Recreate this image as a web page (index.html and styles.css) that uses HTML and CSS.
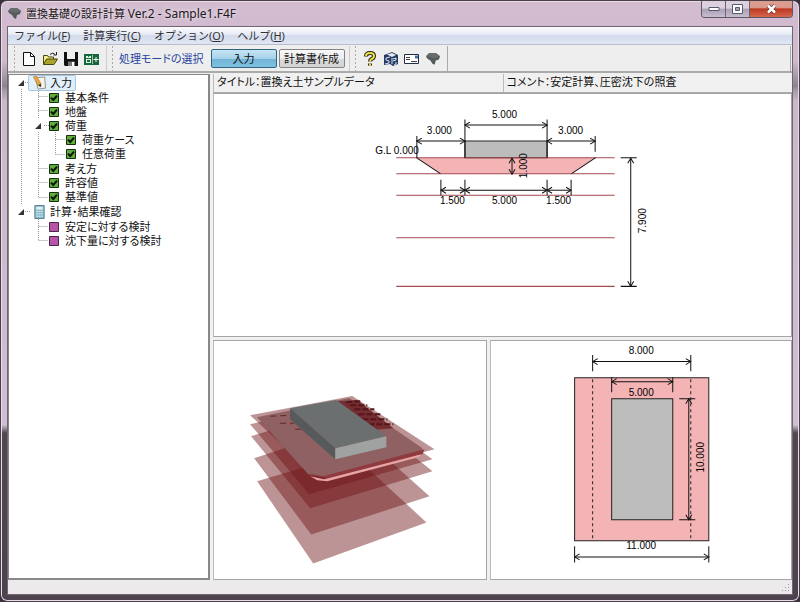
FILE: index.html
```html
<!DOCTYPE html>
<html lang="ja">
<head>
<meta charset="utf-8">
<title>置換基礎の設計計算 Ver.2 - Sample1.F4F</title>
<link rel="stylesheet" href="styles.css">
</head>
<body>
<svg class="defs" aria-hidden="true">
  <defs>
    <marker id="arrow" viewBox="0 0 8 8" refX="7" refY="4" markerWidth="8" markerHeight="8" markerUnits="userSpaceOnUse" orient="auto-start-reverse"><path d="M2 1 7 4 2 7" fill="none" stroke="#111" stroke-width="1"/></marker>
    <symbol id="check" viewBox="0 0 10 10"><path d="M.5.5h9v9h-9z" fill="#5fae3c" stroke="#16300e"/><path d="M2 4.6 4.3 7 8 2.6" fill="none" stroke="#071203" stroke-width="2"/></symbol>
    <symbol id="todo" viewBox="0 0 10 10"><path d="M.5.5h9v9h-9z" fill="#b455a8" stroke="#4b2546"/></symbol>
    <symbol id="open" viewBox="0 0 6 6"><path d="M6 0v6H0z" fill="#333"/></symbol>
    <symbol id="rock" viewBox="0 0 14 14"><path d="M1 4 4 1 10 1 14 4 13 7 10 8 9 12 7 11 5 8 2 6z" fill="#555a5a"/><path d="M1 4 4 1 10 1 14 4 9 6 5 5z" fill="#666b6b"/></symbol>
  </defs>
</svg>
<div class="window">
  <header class="titlebar">
    <svg class="app-icon"><use href="#rock"/></svg>
    <h1>置換基礎の設計計算 <span>Ver.2 - Sample1.F4F</span></h1>
    <div class="caption-buttons">
      <button class="cap" aria-label="最小化"><svg width="12" height="6" viewBox="0 0 12 6"><path d="M1 1.500h10v3H1z" fill="#fff" stroke="#555b6b"/></svg></button>
      <button class="cap" aria-label="最大化"><svg width="11" height="10" viewBox="0 0 11 10"><path d="M.5.5h10v9H.5z" fill="#fff" stroke="#555b6b"/><path d="M3.500 3.500h4v3h-4z" fill="#a9a0b5" stroke="#555b6b"/></svg></button>
      <button class="cap close" aria-label="閉じる"><svg width="11" height="10" viewBox="0 0 11 10"><path d="m2 1.500 7 7m0-7-7 7" stroke="#6b3535" stroke-width="4"/><path d="m2 1.500 7 7m0-7-7 7" stroke="#fff" stroke-width="2.500"/></svg></button>
    </div>
  </header>
  <div class="client">
    <nav class="menubar">
      <a href="#">ファイル(<u>F</u>)</a><a href="#">計算実行(<u>C</u>)</a><a href="#">オプション(<u>O</u>)</a><a href="#">ヘルプ(<u>H</u>)</a>
    </nav>
    <div class="toolbar">
      <div class="bands">
        <div class="band">
          <button class="tool" aria-label="新規作成"><svg viewBox="0 0 16 16"><path d="M2.500 1.500h7l4 4v9h-11z" fill="#fff" stroke="#111"/><path d="M9.500 1.500v4h4" fill="none" stroke="#111"/></svg></button>
          <button class="tool" aria-label="開く"><svg viewBox="0 0 16 16"><path d="M1.500 13.500v-9h4l1 1.500h5v2" fill="#f5ee8c" stroke="#4a480c"/><path d="m1.500 13.500 3-5.500h11l-3.500 5.500z" fill="#aaa52a" stroke="#4a480c"/><path d="M8 3.500q3-3 5 0m1.500-2.500v3h-3" fill="none" stroke="#222"/></svg></button>
          <button class="tool" aria-label="上書き保存"><svg viewBox="0 0 16 16"><path d="M1 1h14v14H2l-1-1z" fill="#111"/><path d="M4 1h8v7H4z" fill="#eee"/><path d="M5 10.500h7V15H5z" fill="#777"/><path d="M9 11h2v4H9z" fill="#fff"/></svg></button>
          <button class="tool" aria-label="計算"><svg viewBox="0 0 16 16"><path d="M0 3h15v11H0z" fill="#14663c"/><path d="M2 5h2v1h1V5h2v2H2zm0 3h5v4H2z" fill="#e4f5df"/><path d="M3 9h3v2H3z" fill="#14663c"/><path d="M8.500 4v9" stroke="#9cc7a8"/><path d="M12 6v5m-2.500-2.500h5" stroke="#fff"/></svg></button>
        </div>
        <div class="band modes">
          <span class="mode-label">処理モードの選択</span>
          <button class="mode active">入力</button>
          <button class="mode">計算書作成</button>
        </div>
        <div class="band">
          <button class="tool" aria-label="ヘルプ"><svg viewBox="0 0 16 16"><path d="M4 5.500q0-3.500 4-3.500t4 3q0 2-2.500 3Q8 9 8 10.500M8 12.500v2" fill="none" stroke="#222" stroke-width="4"/><path d="M4 5q0-3 4-3t4 3q0 2-2.500 3Q8 9 8 10.500M8 12.500v2" fill="none" stroke="#efe13a" stroke-width="2"/></svg></button>
          <button class="tool" aria-label="目次"><svg viewBox="0 0 16 16"><path d="m1 4 3-1 5-2 6 3v9l-5 2-3-2-6 1z" fill="#273b66"/><path d="m4 3.500 5-1.500 4 2-4 2z" fill="#e6ecf4"/><path d="m7 6-4 1v2l3 1v2l-4 1M9 7v6m1-5 3-1v2l-3 1m3 1v2l-2 1" fill="none" stroke="#dce6f2"/></svg></button>
          <button class="tool" aria-label="問い合わせ"><svg viewBox="0 0 16 16"><path d="M.5 3.500h14v9H.5z" fill="#fff" stroke="#222c45"/><path d="M11 4.500h3v3h-3z" fill="#3973a8"/><path d="M2 6.500h4m-4 2h4m1 2h6" stroke="#444"/></svg></button>
          <button class="tool" aria-label="バージョン情報"><svg viewBox="0 0 16 16"><use href="#rock" y="1" width="15" height="15"/></svg></button>
        </div>
      </div>
      <div class="band-rest"></div>
    </div>
    <main class="workspace">
      <aside class="tree-panel">
        <svg class="tree-lines" width="60" height="173" viewBox="0 0 60 173" aria-hidden="true"><path d="M12.500 14v115M16 7.500h6M16 136.500h6M29.500 14v29m0 14v65.500M29.500 21.500h10m-10 14h10M35 50.500h5m-10.500 43h10m-10 14h10m-10 15h10M46.500 57v22.500M46.500 64.500h10m-10 15h10M29.500 144v21.500M29.500 151.500h10m-10 14h10" fill="none" stroke="#999" stroke-dasharray="1 1"/></svg>
        <ul class="tree">
          <li><svg class="twisty"><use href="#open"/></svg><span class="node selected"><svg class="big" viewBox="0 0 15 15"><path d="m3 2 10-1 1 12-8 1z" fill="#f7f3e5" stroke="#8c8f8f"/><path d="m1 1 3-1 5 8v3l-3-1z" fill="#e8a83c" stroke="#a8692a" stroke-width=".6"/><path d="m6 10 3 2V8z" fill="#333"/></svg>入力</span></li>
          <li class="l2"><svg class="mark"><use href="#check"/></svg>基本条件</li>
          <li class="l2"><svg class="mark"><use href="#check"/></svg>地盤</li>
          <li class="l2 parent"><svg class="twisty"><use href="#open"/></svg><svg class="mark"><use href="#check"/></svg>荷重</li>
          <li class="l3"><svg class="mark"><use href="#check"/></svg>荷重ケース</li>
          <li class="l3"><svg class="mark"><use href="#check"/></svg>任意荷重</li>
          <li class="l2"><svg class="mark"><use href="#check"/></svg>考え方</li>
          <li class="l2"><svg class="mark"><use href="#check"/></svg>許容値</li>
          <li class="l2"><svg class="mark"><use href="#check"/></svg>基準値</li>
          <li><svg class="twisty"><use href="#open"/></svg><span class="node"><svg class="big" viewBox="0 0 15 15"><path d="M2.500.5h10v14h-10z" fill="#88b7c9" stroke="#527f92"/><path d="M4 2h7v3H4z" fill="#dff2ef"/><path d="M4 7h7M4 9.500h7M4 12h7" stroke="#e8f5f8" stroke-dasharray="2 .5"/></svg>計算・結果確認</span></li>
          <li class="l2"><svg class="mark"><use href="#todo"/></svg>安定に対する検討</li>
          <li class="l2"><svg class="mark"><use href="#todo"/></svg>沈下量に対する検討</li>
        </ul>
      </aside>
      <section class="content">
        <div class="info"><p>タイトル：置換え土サンプルデータ</p><p>コメント：安定計算、圧密沈下の照査</p></div>
        <div class="view wide">
          <svg viewBox="215 94 576 240" role="img" aria-label="断面図">
            <path d="M417 157h179l-24 16H441z" fill="#f4b4b5"/>
            <path d="M465.500 140.500h82V157h-82z" fill="#bcbcbc" stroke="#222"/>
            <path d="M397 157h218M397 173h218M397 194.500h218M397 237h218M397 285.500h218" stroke="#a34b50"/>
            <path d="m417 157 24 16m155-16-24 16M417.500 135.500V157M465.500 119v38M547.500 119v38M595.500 135.500V151M441.500 179v15.500M465.500 179v15.500M547.500 179v15.500M571.500 179v15.500M621 157h16M621 285.500h16" stroke="#111" fill="none"/>
            <g class="dim"><path d="M465.500 124.500h82"/><path d="M417.500 140.500h48"/><path d="M547.500 140.500h48"/><path d="M441.500 189.500h24"/><path d="M465.500 189.500h82"/><path d="M547.500 189.500h24"/><path d="M512.500 157.500v16"/><path d="M631 157.500v128"/></g>
            <g class="dim-text"><text x="505" y="117">5.000</text><text x="440" y="133">3.000</text><text x="571" y="133">3.000</text><text x="453" y="203">1.500</text><text x="505" y="203">5.000</text><text x="559" y="203">1.500</text><text transform="translate(527 165) rotate(-90)">1.000</text><text transform="translate(646 220) rotate(-90)">7.900</text></g>
            <text class="ground" x="376" y="153">G.L 0.000</text>
          </svg>
        </div>
        <div class="lower">
          <div class="view">
            <svg viewBox="215 340 271 238" role="img" aria-label="立体図">
              <g fill="#701519" fill-opacity=".46">
                <path d="m258 480 94-28 75 69-113 41z"/><path d="m255 457 97-32 78 70-118 38z"/><path d="m252 435 100-30 81 65-122 37z"/><path d="m251 423 102-22 80 57-123 35z"/><path d="m251 414 102-19 82 53-115 30z"/>
              </g>
              <path d="m258 416 92-19 73 50-2 4-97 25-15-3z" fill="#8f6163"/>
              <path d="m338 400 20-1 36 28-24 2z" fill="#742d31"/>
              <path d="m347 401 14-1m-10 4 17 0m-13 4 20 0m-16 5 22 0m-18 5 25 0m-19 5 25 0" stroke="#54161b" stroke-width="2" stroke-dasharray="6 2"/>
              <path d="m271 415 22-1m-12 8 14 0m1 6 8 0" stroke="#64282c" stroke-dasharray="6 4"/>
              <path d="m310 472 14 3 101-27-2 5-95 24-13-3z" fill="#8f3a3f"/>
              <path d="m311 475 14 3 97-25-3 3-91 24-10-1z" fill="#e8a4a4"/>
              <path d="m291 407 46-8 50 36-51 12z" fill="#6c6f6f"/><path d="m291 407 45 40v11l-45-40z" fill="#575a5a"/><path d="m336 447 51-12v11l-51 12z" fill="#a0a2a2"/>
            </svg>
          </div>
          <div class="view">
            <svg viewBox="491 340 300 238" role="img" aria-label="平面図">
              <path d="M574.500 376.500h134v163h-134z" fill="#f4b4b5" stroke="#222"/><path d="M611.500 397.500h61v121h-61z" fill="#bdbdbd" stroke="#222"/>
              <path d="M592.500 378v161M690.500 378v161" stroke="#222" stroke-dasharray="3 3"/>
              <path d="M592.500 354v16M690.500 354v16M611.500 376v15M672.500 376v15M574.500 545v16M708.500 545v16M679 397.500h16M679 518.500h16" stroke="#111"/>
              <g class="dim"><path d="M592.500 360.500h98"/><path d="M611.500 380.500h61"/><path d="M574.500 555.500h134"/><path d="M688.500 397.500v121"/></g>
              <g class="dim-text"><text x="641" y="353">8.000</text><text x="641" y="395">5.000</text><text x="641" y="548">11.000</text><text transform="translate(704 456) rotate(-90)">10.000</text></g>
            </svg>
          </div>
        </div>
      </section>
    </main>
    <footer class="status"><svg width="8" height="8" viewBox="0 0 8 8" aria-hidden="true"><path d="M6 0h1v1H6zM3 3h1v1H3zm3 0h1v1H6zM0 6h1v1H0zm3 0h1v1H3zm3 0h1v1H6z" fill="#999"/></svg></footer>
  </div>
</div>
</body>
</html>
```
FILE: styles.css
```css
* { box-sizing: border-box; }
body { margin: 0; background: #393039; color: #111; font: 11px/14px "Liberation Sans", "Noto Sans CJK JP", sans-serif; }
svg { display: block; }
button { padding: 0; font: inherit; color: inherit; }
h1, p, ul { margin: 0; padding: 0; }
.defs { position: absolute; width: 0; height: 0; }

.window {
  display: flex;
  flex-direction: column;
  height: 100vh;
  padding: 0 6px 6px;
  border: 1px solid #493f49;
  border-radius: 7px;
  background: linear-gradient(#d3bbd0 0, #cfbace 60px, #8d8390 85px, #a89aab 90px, #cbb8cd 100px, #d1bdd4 424px, #51474f 432px, #4d434f 100%);
  box-shadow: inset 0 0 0 1px #e9dce9;
}
.titlebar { display: flex; align-items: center; height: 25px; flex: none; }
.app-icon { width: 14px; height: 14px; margin-right: 5px; }
.titlebar h1 { flex: 1; font: 11px/18px "Noto Sans", "Noto Sans CJK JP", sans-serif; color: #1c1820; text-shadow: 0 0 5px #fff; }
.titlebar h1 span { font-size: 12px; }
.caption-buttons { display: flex; align-self: flex-start; border: 1px solid #5f5666; border-top: 0; border-radius: 0 0 4px 4px; overflow: hidden; }
.cap { display: grid; place-items: center; width: 24px; height: 16px; border: 0; border-right: 1px solid #6b6272; background: linear-gradient(#dcd0de 45%, #a9a0b3 50%, #c9bdd0); }
.cap.close { width: 42px; border: 0; background: linear-gradient(#dc9c90 40%, #bd3a23 50%, #d4654d); }

.client { display: flex; flex: 1; flex-direction: column; min-height: 0; border: 1px solid #6f6670; background: #f0f0f0; }
.menubar { display: flex; gap: 13px; height: 18px; flex: none; padding: 0 6px; border-bottom: 1px solid #b8bfca; background: linear-gradient(#fbfcfe, #e5eaf5 45%, #d4dbed 50%, #dfe6f4); }
.menubar a { font: 11px/17px "Noto Sans", "Noto Sans CJK JP", sans-serif; color: #333; text-decoration: none; }

.toolbar { display: flex; height: 28px; flex: none; border-bottom: 2px solid #aaa; padding: 1px 1px 0; background: #eee; }
.bands { display: flex; border-right: 1px solid #aaa; }
.band { display: flex; align-items: center; gap: 5px; padding: 0 6px 0 12px; background: radial-gradient(circle, #aaa 1px, transparent 1px) 4px 3px / 3px 4px repeat-y; }
.band + .band { border-left: 1px solid #ccc; }
.tool { width: 16px; height: 16px; border: 0; background: none; }
.modes { gap: 2px; padding-right: 4px; }
.mode-label { margin-right: 5px; color: #2845a0; font-feature-settings: "palt"; }
.mode { height: 19px; width: 66px; border: 1px solid #858585; border-radius: 2px; background: linear-gradient(#f8f8f8, #ececec 50%, #dadada 51%, #d4d4d4); }
.mode.active { border-color: #306582; background: linear-gradient(#c7e4f3, #a5d2eb 50%, #70b3d6 51%, #7fc1e0); }
.band-rest { flex: 1; margin-left: 1px; border-right: 1px solid #aaa; }

.workspace { display: flex; flex: 1; gap: 3px; min-height: 0; padding: 1px 0 0; }
.tree-panel { position: relative; width: 202px; flex: none; border: 1px solid #888; border-bottom-width: 2px; border-right-width: 2px; background: #fff; }
.tree-lines { position: absolute; left: 0; top: 0; }
.tree { position: relative; display: grid; grid-template-rows: repeat(12, 1fr); height: 173px; list-style: none; font-feature-settings: "palt"; }
.tree li { display: flex; align-items: center; padding-left: 9px; white-space: nowrap; }
.tree .l2 { padding-left: 40px; }
.tree .parent { padding-left: 26px; }
.tree .l3 { padding-left: 57px; }
.twisty { width: 6px; height: 6px; margin-right: 4px; }
.parent .twisty { margin-right: 8px; }
.mark { width: 10px; height: 10px; margin-right: 6px; }
.node { display: flex; align-items: center; gap: 3px; padding: 0 3px; border: 1px solid transparent; border-radius: 2px; }
.node.selected { border-color: #a5c6e3; background: #e1effb; }
.big { width: 15px; height: 14px; }

.content { display: grid; flex: 1; grid-template-rows: 19px 1fr 1fr; min-width: 0; }
.content > .lower { margin-top: 3px; }
.info { display: grid; grid-template-columns: 1fr 1fr; font-feature-settings: "palt"; border-bottom: 1px solid #aaa; }
.info p { padding: 1px 3px; border-left: 1px solid #bbb; }
.view { min-width: 0; min-height: 0; border: 1px solid #a5a5a5; border-left-color: #bbb; background: #fff; }
.view svg { width: 100%; height: 100%; }
.lower { display: grid; grid-template-columns: 19fr 21fr; gap: 3px; min-height: 0; }
.dim path { fill: none; stroke: #111; marker-start: url(#arrow); marker-end: url(#arrow); }
.dim-text { font: 10px "Liberation Sans", sans-serif; text-anchor: middle; }
.ground { font: 10px "Liberation Sans", sans-serif; }
.status { display: flex; align-items: flex-end; justify-content: flex-end; height: 14px; flex: none; padding: 2px; background: #eceaea; }
```
